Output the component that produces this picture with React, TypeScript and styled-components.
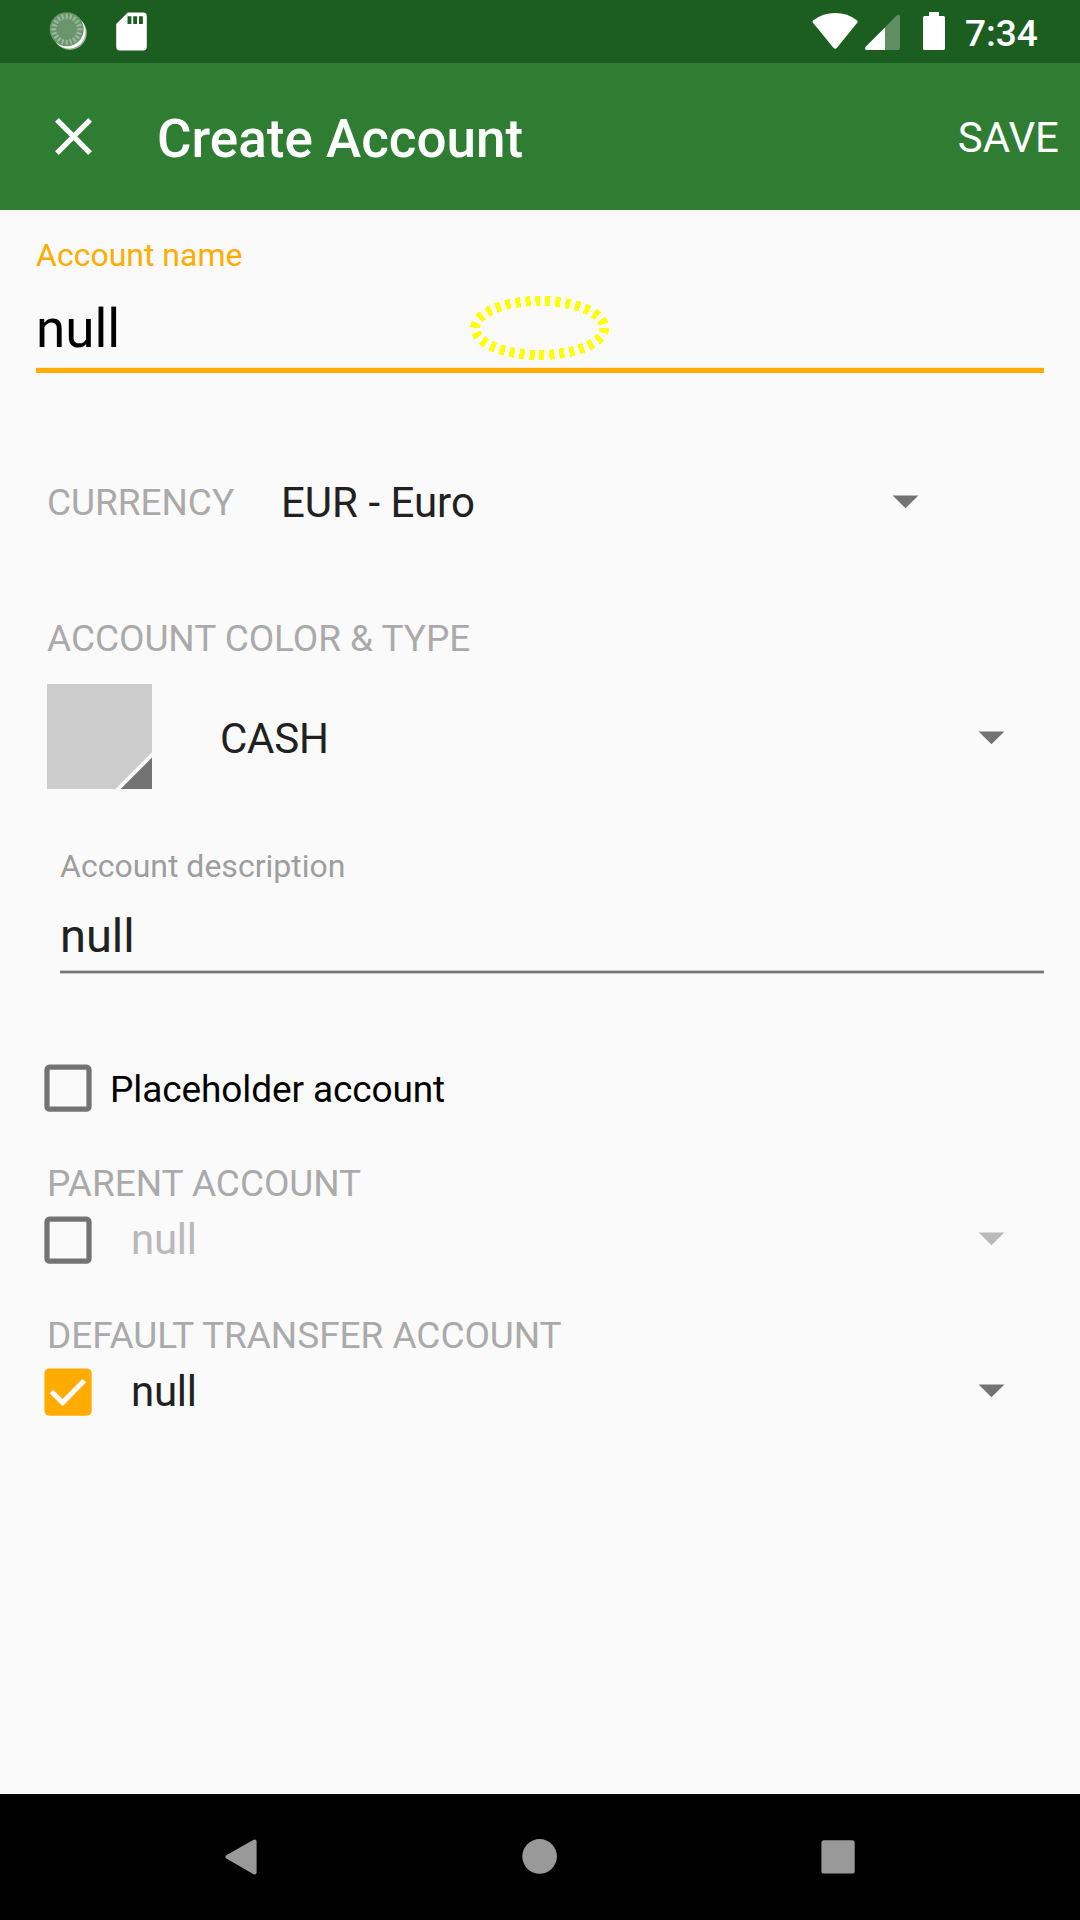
import React from "react";
import styled, { createGlobalStyle } from "styled-components";

const GlobalStyle = createGlobalStyle`
  *, *::before, *::after { box-sizing: border-box; }
  body { margin: 0; background: #fafafa; }
`;

const Screen = styled.div`
  width: 1080px;
  height: 1920px;
  display: flex;
  flex-direction: column;
  overflow: hidden;
  background: #fafafa;
  color: #212121;
  font-family: Roboto, "Noto Sans", sans-serif;
  font-size: 42px;
  line-height: 49px;
  white-space: nowrap;
`;

const StatusBar = styled.header`
  height: 63px;
  flex: none;
  display: flex;
  justify-content: space-between;
  background: #1b5e20;
  color: #fff;
`;

const StatusGroup = styled.div`
  display: flex;
`;

const Clock = styled.time`
  width: 115px;
  padding-top: 12px;
  font-size: 37px;
  line-height: 43px;
  font-weight: 500;
`;

const AppBar = styled.div`
  height: 147px;
  flex: none;
  display: flex;
  align-items: center;
  padding: 0 21px 0 52px;
  background: #2e7d32;
  color: #fff;
`;

const IconButton = styled.button`
  display: flex;
  padding: 0;
  border: 0;
  background: none;
`;

const Title = styled.h1`
  flex: 1;
  margin: 0 0 0 62px;
  padding-top: 5px;
  font-size: 53px;
  line-height: 62px;
  font-weight: 500;
`;

const SaveButton = styled.button`
  padding: 2px 0 0;
  border: 0;
  background: none;
  color: inherit;
  font: inherit;
`;

const Form = styled.main`
  flex: 1;
  display: flex;
  flex-direction: column;
  padding: 26px 36px 0;
`;

const Field = styled.div<{ $indent?: number; $top?: number }>`
  display: flex;
  flex-direction: column;
  margin-left: ${(p) => p.$indent ?? 0}px;
  margin-top: ${(p) => p.$top ?? 0}px;
`;

const FloatingLabel = styled.label<{ $active?: boolean }>`
  font-size: 32px;
  line-height: 38px;
  color: ${(p) => (p.$active ? "#ffab00" : "#9e9e9e")};
`;

const NameValue = styled.div`
  position: relative;
  margin-top: 24px;
  font-size: 53px;
  line-height: 62px;
  color: #000;
`;

const DescriptionValue = styled.div`
  margin-top: 23px;
  font-size: 47px;
  line-height: 55px;
`;

const ActiveLine = styled.div`
  margin-top: 7px;
  height: 6px;
  border-top: 1px solid #fbeed4;
  background: #ffab00;
`;

const IdleLine = styled.div`
  margin-top: 7px;
  height: 4px;
  border: solid #c8c8c8;
  border-width: 1px 0;
  background: #757575;
`;

const TouchMark = styled.svg`
  position: absolute;
  left: 434px;
  top: -3px;
`;

const Row = styled.div<{ $top: number; $height: number; $right?: number }>`
  display: flex;
  align-items: center;
  margin-top: ${(p) => p.$top}px;
  height: ${(p) => p.$height}px;
  padding: 0 ${(p) => p.$right ?? 39}px 0 8px;
`;

const SectionLabel = styled.div<{ $top?: number; $inline?: boolean }>`
  margin-top: ${(p) => p.$top ?? 0}px;
  margin-left: ${(p) => (p.$inline ? 3 : 11)}px;
  width: ${(p) => (p.$inline ? "234px" : "auto")};
  font-size: 37px;
  line-height: 43px;
  letter-spacing: -0.04px;
  color: #aaa;
`;

const SpinnerValue = styled.div<{
  $left?: number;
  $muted?: boolean;
  $top?: number;
  $bottom?: number;
  $tight?: boolean;
}>`
  flex: 1;
  margin-left: ${(p) => p.$left ?? 0}px;
  padding-top: ${(p) => p.$top ?? 0}px;
  padding-bottom: ${(p) => p.$bottom ?? 0}px;
  letter-spacing: ${(p) => (p.$tight ? "-0.25px" : "normal")};
  color: ${(p) => (p.$muted ? "#b9b9b9" : "#212121")};
`;

const CheckLabel = styled.label`
  margin-left: 18px;
  padding-top: 3px;
  font-size: 37px;
  line-height: 43px;
  letter-spacing: -0.1px;
  color: #000;
`;

const Swatch = styled.svg`
  margin-left: 3px;
`;

const Arrow = styled.svg<{ $top: number; $bottom: number }>`
  margin: ${(p) => p.$top}px 0 ${(p) => p.$bottom}px;
`;

const NavBar = styled.nav`
  flex: none;
  height: 126px;
  display: flex;
  justify-content: space-between;
  padding: 0 216px;
  background: #000;
`;

const Caret = ({ muted, top = 0, bottom = 0 }: { muted?: boolean; top?: number; bottom?: number }) => (
  <Arrow width="27" height="15" viewBox="0 0 27 15" $top={top} $bottom={bottom}>
    <path d="M.6 .4H26.4L13.5 13.3Z" fill={muted ? "#b9b9b9" : "#737373"} />
  </Arrow>
);

const Checkbox = ({ checked }: { checked?: boolean }) => (
  <svg width="48" height="48" viewBox="0 0 48 48">
    {checked ? (
      <>
        <rect x=".4" y=".4" width="47.25" height="47.25" rx="5" fill="#ffab00" />
        <path d="M7.3 23.5L18.7 34.5L40.3 12.5" fill="none" stroke="#fafafa" strokeWidth="5.2" />
      </>
    ) : (
      <rect x="3" y="3.1" width="42" height="42" rx="2.6" fill="none" stroke="#737373" strokeWidth="5.25" />
    )}
  </svg>
);

const SpinnerStatusIcon = () => (
  <svg width="105" height="63" viewBox="0 0 105 63">
    <circle cx="69.9" cy="33" r="16.9" fill="#8fb092" />
    <circle cx="68.9" cy="31.9" r="16.7" fill="#fff" />
    <circle cx="66.7" cy="29.3" r="17" fill="#6a966d" />
    {Array.from({ length: 20 }, (_, i) => (
      <path
        key={i}
        d="M66.7 13.8V18.9"
        stroke="#9dba9f"
        strokeWidth="2"
        transform={`rotate(${i * 18} 66.7 29.3)`}
      />
    ))}
  </svg>
);

const SdCardIcon = () => (
  <svg width="60" height="63" viewBox="105 0 60 63">
    <path
      fillRule="evenodd"
      fill="#fff"
      d="M127.8 12.5H143.2Q146.8 12.5 146.8 16.1V46.8Q146.8 50.4 143.2 50.4H119.8Q116.2 50.4 116.2 46.8V24ZM127.5 16.2V24H131.4V16.2ZM133.2 16.2V24H137.1V16.2ZM139 16.2V24H142.9V16.2Z"
    />
  </svg>
);

const RadioIcons = () => (
  <svg width="165" height="63" viewBox="800 0 165 63">
    <path
      fill="#fff"
      d="M813 20.4Q823 13 835.2 13Q847.4 13 857.2 20.4Q858.2 21.4 857.4 22.5L837 47.8Q835.2 49.8 833.4 47.8L812.8 22.5Q812 21.4 813 20.4Z"
    />
    <path
      fill="#fff"
      opacity=".3"
      d="M866 46.6L896.6 15.6Q900 13.6 900 17V48.3Q900 50 898.3 50H866.5Q863.8 49.4 866 46.6Z"
    />
    <path fill="#fff" d="M885 27.4V50H866.5Q863.8 49.4 866 46.6Z" />
    <path
      fill="#fff"
      d="M929 12H939V16H943.5Q945 16 945 17.5V48.5Q945 50 943.5 50H924.5Q923 50 923 48.5V17.5Q923 16 924.5 16H929Z"
    />
  </svg>
);

export default function App() {
  return (
    <>
      <GlobalStyle />
      <Screen>
        <StatusBar>
          <StatusGroup>
            <SpinnerStatusIcon />
            <SdCardIcon />
          </StatusGroup>
          <StatusGroup>
            <RadioIcons />
            <Clock>7:34</Clock>
          </StatusGroup>
        </StatusBar>

        <AppBar>
          <IconButton aria-label="Close">
            <svg width="43" height="43" viewBox="0 0 43 43">
              <path d="M4.9 4.9L38.1 38.1M38.1 4.9L4.9 38.1" stroke="#fff" strokeWidth="5.2" />
            </svg>
          </IconButton>
          <Title>Create Account</Title>
          <SaveButton>SAVE</SaveButton>
        </AppBar>

        <Form>
          <Field>
            <FloatingLabel $active>Account name</FloatingLabel>
            <NameValue>
              null
              <TouchMark width="140" height="66" viewBox="470 295 140 66">
                <ellipse
                  cx="539.7"
                  cy="328"
                  rx="64.5"
                  ry="27"
                  fill="none"
                  stroke="#ff0"
                  strokeWidth="10"
                  strokeDasharray="5 5"
                  shapeRendering="crispEdges"
                />
              </TouchMark>
            </NameValue>
            <ActiveLine />
          </Field>

          <Row $top={105} $height={49} $right={125}>
            <SectionLabel $inline>CURRENCY</SectionLabel>
            <SpinnerValue>EUR - Euro</SpinnerValue>
            <Caret />
          </Row>

          <SectionLabel $top={90}>ACCOUNT COLOR &amp; TYPE</SectionLabel>
          <Row $top={24} $height={105}>
            <Swatch width="105" height="105" viewBox="0 0 105 105">
              <rect width="105" height="105" fill="#ccc" />
              <path d="M105 68.3V74L74 105H68.3Z" fill="#fafafa" />
              <path d="M105 73.6V105H73.6Z" fill="#737373" />
            </Swatch>
            <SpinnerValue $left={68} $top={4} $tight>CASH</SpinnerValue>
            <Caret top={4} />
          </Row>

          <Field $indent={24} $top={58}>
            <FloatingLabel>Account description</FloatingLabel>
            <DescriptionValue>null</DescriptionValue>
            <IdleLine />
          </Field>

          <Row $top={90} $height={48}>
            <Checkbox />
            <CheckLabel>Placeholder account</CheckLabel>
          </Row>

          <SectionLabel $top={50}>PARENT ACCOUNT</SectionLabel>
          <Row $top={11} $height={48}>
            <Checkbox />
            <SpinnerValue $left={39} $bottom={1} $muted $tight>null</SpinnerValue>
            <Caret muted bottom={1} />
          </Row>

          <SectionLabel $top={50}>DEFAULT TRANSFER ACCOUNT</SectionLabel>
          <Row $top={11} $height={48}>
            <Checkbox checked />
            <SpinnerValue $left={39} $bottom={1} $tight>null</SpinnerValue>
            <Caret bottom={1} />
          </Row>
        </Form>

        <NavBar>
          <svg width="50" height="126" viewBox="216 1794 50 126">
            <path
              fill="#999"
              d="M226.3 1855.2L253.6 1839.8Q256.6 1838.6 256.6 1841.6V1872.4Q256.6 1875.4 253.6 1874.2L226.3 1858.6Q224.4 1856.9 226.3 1855.2Z"
            />
          </svg>
          <svg width="50" height="126" viewBox="515 1794 50 126">
            <circle cx="539.6" cy="1856.4" r="17.3" fill="#999" />
          </svg>
          <svg width="50" height="126" viewBox="814 1794 50 126">
            <rect x="821.4" y="1840.3" width="33.3" height="33.3" rx="2.6" fill="#999" />
          </svg>
        </NavBar>
      </Screen>
    </>
  );
}
